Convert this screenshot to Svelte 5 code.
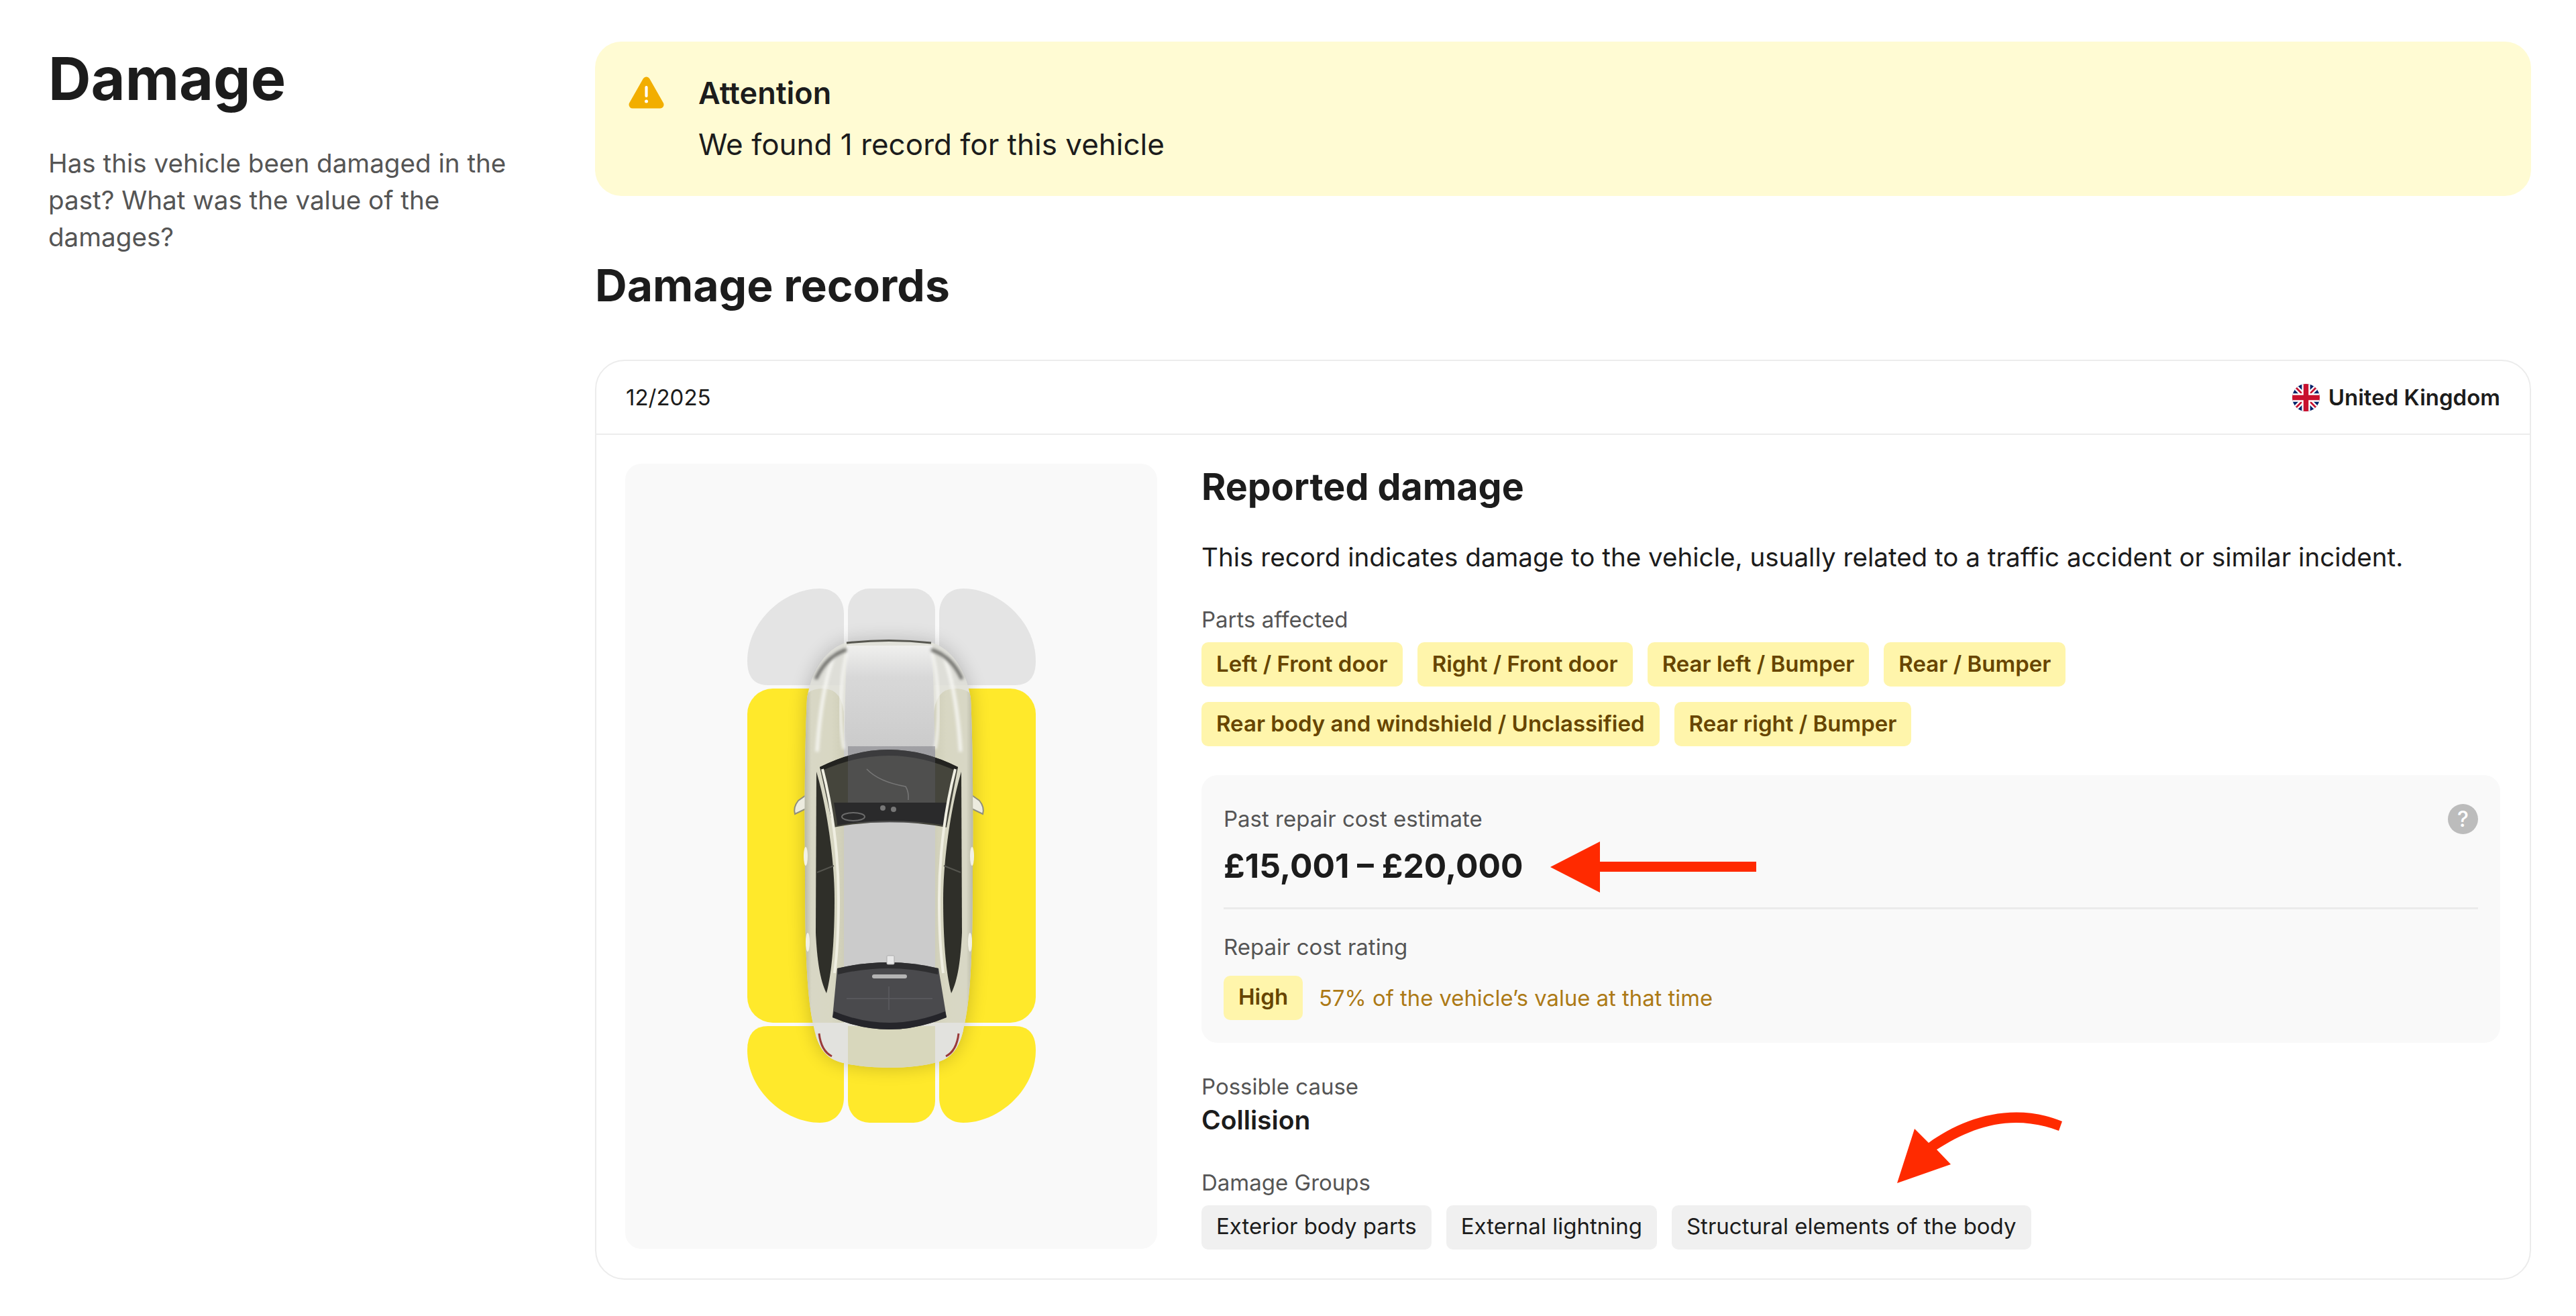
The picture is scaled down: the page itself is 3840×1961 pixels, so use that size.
<script>
  const partsAffected = [
    'Left / Front door',
    'Right / Front door',
    'Rear left / Bumper',
    'Rear / Bumper',
    'Rear body and windshield / Unclassified',
    'Rear right / Bumper'
  ];
  const damageGroups = ['Exterior body parts', 'External lightning', 'Structural elements of the body'];

  const bodyPath =
    'M1260 958 Q1325 950 1390 958 C1420 968 1440 1000 1447 1040 C1450 1100 1451 1200 1450 1300 C1450 1400 1448 1480 1438 1525 C1432 1560 1420 1575 1400 1582 C1360 1594 1290 1594 1250 1582 C1230 1575 1218 1560 1212 1525 C1202 1480 1200 1400 1200 1300 C1199 1200 1200 1100 1203 1040 C1210 1000 1230 968 1260 958 Z';
  const cornerPath =
    'M1222 877 C1245 877 1258 893 1258 915 L1258 990 Q1258 1021 1228 1021 L1145 1021 Q1114 1021 1114 985 C1114 925 1170 877 1222 877 Z';
</script>

<div class="page">
  <aside class="intro">
    <h1>Damage</h1>
    <p>Has this vehicle been damaged in the past? What was the value of the damages?</p>
  </aside>

  <main>
    <div class="alert">
      <svg class="warn" viewBox="0 0 53 50">
        <path d="M26.5 6 L47 42 H6 Z" fill="#f2ae00" stroke="#f2ae00" stroke-width="11" stroke-linejoin="round" />
        <rect x="24.4" y="14" width="4.2" height="17" rx="2" fill="#fff" />
        <circle cx="26.5" cy="37" r="2.5" fill="#fff" />
      </svg>
      <div>
        <div class="alert-title">Attention</div>
        <div class="alert-text">We found 1 record for this vehicle</div>
      </div>
    </div>

    <h2>Damage records</h2>

    <section class="card">
      <header class="card-head">
        <span>12/2025</span>
        <span class="country">
          <svg class="flag" viewBox="0 0 60 60">
            <defs>
              <clipPath id="flagClip"><circle cx="30" cy="30" r="30" /></clipPath>
            </defs>
            <g clip-path="url(#flagClip)">
              <rect width="60" height="60" fill="#012169" />
              <path d="M0 0 L60 60 M60 0 L0 60" stroke="#fff" stroke-width="11" />
              <path d="M0 0 L60 60 M60 0 L0 60" stroke="#c8102e" stroke-width="4" />
              <path d="M30 0 V60 M0 30 H60" stroke="#fff" stroke-width="18" />
              <path d="M30 0 V60 M0 30 H60" stroke="#c8102e" stroke-width="11" />
            </g>
          </svg>
          United Kingdom
        </span>
      </header>

      <div class="card-body">
        <div class="diagram">
          <svg viewBox="932 691 793 1170" width="793" height="1170">
            <defs>
              <clipPath id="bodyClip"><path d={bodyPath} /></clipPath>
              <filter id="carShadow" x="-30%" y="-30%" width="160%" height="160%">
                <feGaussianBlur stdDeviation="14" />
              </filter>
              <filter id="soft" x="-20%" y="-20%" width="140%" height="140%">
                <feGaussianBlur stdDeviation="2" />
              </filter>
              <linearGradient id="hood" x1="0" y1="0" x2="0" y2="1">
                <stop offset="0" stop-color="#f0f0ee" />
                <stop offset="0.3" stop-color="#d8d8d8" />
                <stop offset="1" stop-color="#cacaca" />
              </linearGradient>
              <linearGradient id="sideLeft" x1="0" y1="0" x2="1" y2="0">
                <stop offset="0" stop-color="#aeae9b" />
                <stop offset="0.22" stop-color="#d8d7c5" />
                <stop offset="0.7" stop-color="#d8d7c3" />
                <stop offset="1" stop-color="#cfceb8" />
              </linearGradient>
              <linearGradient id="sideRight" x1="1" y1="0" x2="0" y2="0">
                <stop offset="0" stop-color="#aeae9b" />
                <stop offset="0.22" stop-color="#d8d7c5" />
                <stop offset="0.7" stop-color="#d8d7c3" />
                <stop offset="1" stop-color="#cfceb8" />
              </linearGradient>
            </defs>

            <!-- damage zones -->
            <g fill="#e4e4e4">
              <path d={cornerPath} />
              <path d={cornerPath} transform="translate(2658 0) scale(-1 1)" />
              <rect x="1264" y="877" width="130" height="144" rx="32" />
            </g>
            <g fill="#ffe92b">
              <rect x="1114" y="1026" width="144" height="498" rx="38" />
              <rect x="1399" y="1026" width="145" height="498" rx="38" />
              <path d={cornerPath} transform="translate(0 2550) scale(1 -1)" />
              <path d={cornerPath} transform="translate(2658 2550) scale(-1 -1)" />
              <rect x="1264" y="1529" width="130" height="144" rx="32" />
            </g>

            <!-- car -->
            <path d={bodyPath} fill="#000" opacity="0.2" filter="url(#carShadow)" />
            <path d="M1214 1176 L1190 1193 Q1182 1203 1185 1213 L1216 1198 Z" fill="#ecebdf" stroke="#8f8e7c" stroke-width="2" />
            <path d="M1436 1176 L1460 1193 Q1468 1203 1465 1213 L1434 1198 Z" fill="#ecebdf" stroke="#8f8e7c" stroke-width="2" />
            <path d={bodyPath} fill="#e2e2da" />
            <g clip-path="url(#bodyClip)">
              <path d="M1200 958 H1258 V1021 H1200 Z" fill="#deded8" />
              <path d="M1392 958 H1450 V1021 H1392 Z" fill="#deded8" />
              <path d="M1196 1056 Q1196 1026 1226 1026 Q1258 1026 1258 1070 V1524 H1196 Z" fill="url(#sideLeft)" />
              <path d="M1454 1056 Q1454 1026 1424 1026 Q1392 1026 1392 1070 V1524 H1454 Z" fill="url(#sideRight)" />
              <path d="M1262 962 H1390 L1394 1122 H1258 Z" fill="url(#hood)" />
              <rect x="1258" y="1120" width="136" height="330" fill="#cbcbcb" />
              <path d="M1264 1529 H1394 V1600 H1264 Z" fill="#d8d7bc" />
              <path d="M1216 1524 H1264 V1600 H1216 Z" fill="#e2e2de" />
              <path d="M1394 1524 H1436 V1600 H1394 Z" fill="#e2e2de" />
              <path d="M1244 975 C1230 1010 1222 1060 1218 1120" fill="none" stroke="#f6f6f2" stroke-width="5" filter="url(#soft)" />
              <path d="M1406 975 C1420 1010 1428 1060 1432 1120" fill="none" stroke="#f6f6f2" stroke-width="5" filter="url(#soft)" />
              <path d="M1264 966 C1252 1010 1250 1070 1258 1116" fill="none" stroke="#f6f6f3" stroke-width="4" filter="url(#soft)" />
              <path d="M1388 966 C1400 1010 1402 1070 1394 1116" fill="none" stroke="#f6f6f3" stroke-width="4" filter="url(#soft)" />
            </g>

            <path d="M1262 958 Q1325 951 1388 958" fill="none" stroke="#56564f" stroke-width="3" />
            <path d="M1216 1012 C1226 990 1240 975 1262 968" fill="none" stroke="#6c6c68" stroke-width="5" filter="url(#soft)" />
            <path d="M1434 1012 C1424 990 1410 975 1388 968" fill="none" stroke="#6c6c68" stroke-width="5" filter="url(#soft)" />

            <!-- windows -->
            <path d="M1222 1143 Q1325 1091 1428 1143 L1411 1233 Q1325 1217 1242 1233 Z" fill="#45453c" />
            <path d="M1222 1143 Q1325 1091 1428 1143 L1426 1149 Q1325 1103 1224 1149 Z" fill="#232320" />
            <path d="M1264 1112 H1394 V1226 H1264 Z" fill="#5e6068" opacity="0.4" />
            <path d="M1292 1146 Q1310 1165 1350 1172 Q1355 1180 1354 1192" fill="none" stroke="#777" stroke-width="1.5" />
            <path d="M1248 1226 L1243 1196 Q1325 1196 1413 1196 L1410 1230 Q1325 1216 1248 1230 Z" fill="#2a2a2b" />
            <ellipse cx="1272" cy="1217" rx="17" ry="6" fill="none" stroke="#6b6b6b" stroke-width="2" />
            <circle cx="1316" cy="1204" r="4" fill="#777" />
            <circle cx="1332" cy="1206" r="4" fill="#777" />
            <path d="M1217 1150 C1232 1200 1244 1280 1244 1340 C1244 1400 1240 1450 1232 1480 C1222 1460 1218 1430 1216 1390 Z" fill="#2f2f29" />
            <path d="M1433 1150 C1418 1200 1406 1280 1406 1340 C1406 1400 1410 1450 1418 1480 C1428 1460 1432 1430 1434 1390 Z" fill="#2f2f29" />
            <path d="M1218 1300 L1243 1290 M1432 1300 L1407 1290" stroke="#55554e" stroke-width="2" />
            <path d="M1226 1146 C1240 1200 1250 1270 1250 1340 C1250 1380 1248 1420 1244 1450" fill="none" stroke="#f0efe2" stroke-width="4" />
            <path d="M1424 1146 C1410 1200 1400 1270 1400 1340 C1400 1380 1402 1420 1406 1450" fill="none" stroke="#f0efe2" stroke-width="4" />
            <path d="M1248 1443 Q1325 1425 1399 1443 L1411 1516 Q1325 1552 1241 1516 Z" fill="#4a4a4d" />
            <path d="M1241 1516 Q1325 1552 1411 1516 L1409 1507 Q1325 1541 1243 1507 Z" fill="#25252a" />
            <path d="M1248 1443 Q1325 1425 1399 1443 L1398 1452 Q1325 1434 1249 1452 Z" fill="#2e2e30" />
            <rect x="1300" y="1452" width="52" height="6" rx="3" fill="#b4b4b4" />
            <path d="M1325 1470 V1505 M1262 1488 H1390" stroke="#5c5c60" stroke-width="1.5" />
            <rect x="1322" y="1424" width="11" height="13" rx="1.5" fill="#e8e8e8" stroke="#a9a9a9" />
            <path d="M1221 1540 Q1224 1566 1240 1574" fill="none" stroke="#9a3a3a" stroke-width="3" />
            <path d="M1429 1540 Q1426 1566 1410 1574" fill="none" stroke="#9a3a3a" stroke-width="3" />
            <ellipse cx="1201" cy="1276" rx="3" ry="14" fill="#f2f1e6" />
            <ellipse cx="1204" cy="1404" rx="3" ry="14" fill="#f2f1e6" />
            <ellipse cx="1449" cy="1276" rx="3" ry="14" fill="#f2f1e6" />
            <ellipse cx="1446" cy="1404" rx="3" ry="14" fill="#f2f1e6" />
          </svg>
        </div>

        <div class="details">
          <h3>Reported damage</h3>
          <p class="summary">This record indicates damage to the vehicle, usually related to a traffic accident or similar incident.</p>

          <div class="label parts-label">Parts affected</div>
          <div class="chips">
            {#each partsAffected as part}
              <span class="chip yellow">{part}</span>
            {/each}
          </div>

          <div class="cost">
            <div class="cost-row">
              <span class="label">Past repair cost estimate</span>
              <span class="help">?</span>
            </div>
            <div class="price">£15,001 – £20,000</div>
            <div class="rule"></div>
            <div class="label">Repair cost rating</div>
            <div class="rating">
              <span class="chip yellow">High</span>
              <span class="rating-note">57% of the vehicle’s value at that time</span>
            </div>
          </div>

          <div class="label cause-label">Possible cause</div>
          <div class="cause">Collision</div>

          <div class="label groups-label">Damage Groups</div>
          <div class="chips">
            {#each damageGroups as group}
              <span class="chip">{group}</span>
            {/each}
          </div>
        </div>
      </div>

      <!-- annotations drawn over the screenshot -->
      <svg class="arrow arrow-price" viewBox="0 0 307 76">
        <path d="M0 38 L74 0 V30 H307 V45 H74 V76 Z" fill="#ff2a00" />
      </svg>
      <svg class="arrow arrow-groups" viewBox="0 0 248 114">
        <path d="M0 113 L26 32 L47 53 C95 18 170 -10 246 21 L241 35 C170 8 110 30 59 63 L80 85 Z" fill="#ff2a00" />
      </svg>
    </section>
  </main>
</div>

<style>
  :global(body) {
    background: #fff;
    color: #1c1c1c;
    font-family: Inter, "Liberation Sans", sans-serif;
  }

  .page {
    display: grid;
    grid-template-columns: 815px 2886px;
    padding: 62px 67px 56px 72px;
  }

  h1 {
    margin: 0;
    font-size: 88px;
    line-height: 110px;
    font-weight: 700;
  }

  .intro p {
    margin: 44px 0 0;
    width: 700px;
    font-size: 38.6px;
    line-height: 55px;
    color: #555;
  }

  .alert {
    display: flex;
    gap: 51px;
    height: 230px;
    box-sizing: border-box;
    padding: 52px 50px;
    background: #fffbd3;
    border-radius: 39px;
  }

  .warn {
    width: 53px;
    height: 50px;
    flex: none;
  }

  .alert-title {
    font-size: 45px;
    line-height: 50px;
    font-weight: 600;
  }

  .alert-text {
    margin-top: 25px;
    font-size: 44px;
    line-height: 52px;
  }

  h2 {
    margin: 93px 0 71px;
    font-size: 66px;
    line-height: 80px;
    font-weight: 700;
  }

  .card {
    position: relative;
    border: 2.5px solid #ececec;
    border-radius: 44px;
  }

  .card-head {
    display: flex;
    justify-content: space-between;
    align-items: center;
    height: 108px;
    padding: 0 44px;
    border-bottom: 2.5px solid #ececec;
    font-size: 33px;
  }

  .country {
    display: flex;
    align-items: center;
    gap: 13px;
    font-weight: 600;
  }

  .flag {
    width: 41px;
    height: 41px;
  }

  .card-body {
    display: flex;
    gap: 66px;
    padding: 43px 44px 43px 43px;
  }

  .diagram {
    flex: none;
    width: 793px;
    height: 1170px;
    background: #f9f9f9;
    border-radius: 24px;
  }

  .diagram svg {
    display: block;
  }

  .details {
    flex: 1;
    min-width: 0;
  }

  h3 {
    margin: 0;
    font-size: 55.5px;
    line-height: 68px;
    font-weight: 700;
  }

  .summary {
    margin: 41px 0 0;
    font-size: 38.6px;
    line-height: 60px;
  }

  .label {
    font-size: 33px;
    line-height: 46px;
    color: #555;
  }

  .parts-label {
    margin-top: 40px;
  }

  .chips {
    display: flex;
    flex-wrap: wrap;
    gap: 23px 22px;
    margin-top: 11px;
  }

  .chip {
    display: inline-flex;
    align-items: center;
    height: 66px;
    box-sizing: border-box;
    padding: 0 22px 3px;
    border-radius: 10px;
    background: #f0f0f0;
    font-size: 33px;
    white-space: nowrap;
  }

  .chip.yellow {
    background: #fff5ab;
    color: #674500;
    font-size: 33px;
    font-weight: 600;
  }

  .cost {
    margin-top: 43px;
    padding: 42px 33px 34px;
    background: #f9f9f9;
    border-radius: 24px;
  }

  .cost-row {
    display: flex;
    justify-content: space-between;
    align-items: center;
  }

  .help {
    width: 45px;
    height: 45px;
    border-radius: 50%;
    background: #bcbcbc;
    color: #fff;
    display: flex;
    align-items: center;
    justify-content: center;
    font-size: 32px;
    font-weight: 500;
  }

  .price {
    margin-top: 15px;
    font-size: 49.7px;
    line-height: 64px;
    font-weight: 700;
  }

  .rule {
    height: 2.5px;
    margin: 30px 0 33px;
    background: #ebebeb;
  }

  .rating {
    display: flex;
    align-items: center;
    gap: 24px;
    margin-top: 20px;
  }

  .rating-note {
    font-size: 32.8px;
    color: #ad7a16;
  }

  .cause-label {
    margin-top: 42px;
  }

  .cause {
    font-size: 39px;
    line-height: 54px;
    font-weight: 600;
  }

  .groups-label {
    margin-top: 43px;
  }

  .arrow {
    position: absolute;
  }

  .arrow-price {
    left: 1422px;
    top: 716px;
    width: 307px;
    height: 76px;
  }

  .arrow-groups {
    left: 1939px;
    top: 1112px;
    width: 248px;
    height: 114px;
  }
</style>
